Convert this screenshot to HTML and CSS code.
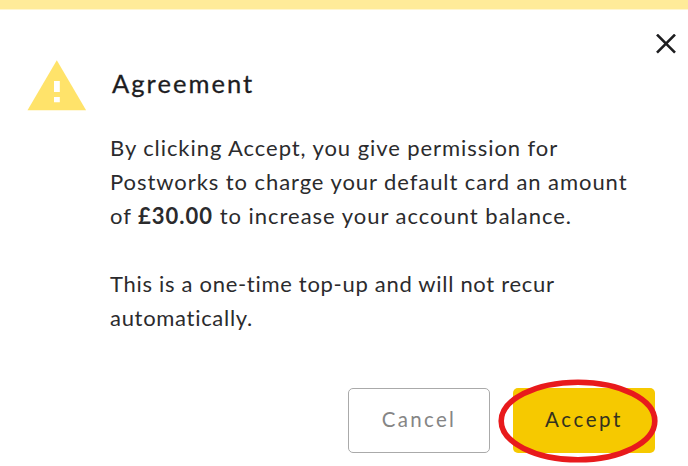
FILE: index.html
```html
<!DOCTYPE html>
<html lang="en">
  <head>
    <meta charset="utf-8">
    <title>Agreement</title>
    <link rel="stylesheet" href="styles.css">
  </head>
  <body>
    <div class="dialog">
      <button class="close" aria-label="Close">
        <svg width="20" height="20" viewBox="0 0 20 20">
          <path d="M1 .6L19 18.6M19 .6L1 18.6" stroke="#1d1d1f" stroke-width="2.6" />
        </svg>
      </button>
      <div class="header">
        <svg class="warning" width="60" height="51" viewBox="0 0 60 51">
          <path d="M29.8 .2L59.1 50.2H.5Z" fill="#ffe36a" />
          <path d="M27 21H32.8V32H27ZM27 37H32.8V42.3H27Z" fill="#fff" />
        </svg>
        <h1>Agreement</h1>
      </div>
      <div class="content">
        <p>
          By clicking Accept, you give permission for<br>
          Postworks to charge your default card an amount<br>
          <span class="amount">of <strong>£30.00</strong> to increase your account balance.</span>
        </p>
        <p class="note">
          This is a one-time top-up and will not recur<br>
          automatically.
        </p>
      </div>
      <div class="actions">
        <button class="btn cancel">Cancel</button>
        <button class="btn accept">
          Accept
          <svg class="highlight" width="160" height="84" viewBox="0 0 160 84">
            <ellipse cx="80" cy="42" rx="76.8" ry="38.8" fill="none" stroke="#e81a1c" stroke-width="5.6" />
          </svg>
        </button>
      </div>
    </div>
  </body>
</html>
```

FILE: styles.css
```css
body {
  margin: 0;
  background: #fff;
  color: #2b2b2d;
  font-family: Lato, "Liberation Sans", sans-serif;
}
.dialog {
  display: flex;
  flex-direction: column;
  box-sizing: border-box;
  height: 466px;
  border-top: 9px solid #ffeb99;
  box-shadow: inset 0 1px #fff6d0;
  overflow: hidden;
}
button {
  font-family: inherit;
  padding: 0;
}
.close {
  align-self: flex-end;
  margin: 25px 12px 0 0;
  width: 20px;
  height: 20px;
  border: none;
  background: none;
}
svg {
  display: block;
}
.header {
  display: flex;
  align-items: center;
  gap: 25px;
  height: 51px;
  margin: 6px 0 0 27px;
}
h1 {
  margin: 0 0 6px;
  color: #1d1d1f;
  font-size: 25.5px;
  font-weight: 400;
  letter-spacing: 2.05px;
  -webkit-text-stroke: 0.3px;
}
.content {
  margin: 20px 0 0 110px;
  font-size: 22px;
  line-height: 34px;
  letter-spacing: 0.93px;
  white-space: nowrap;
}
p {
  margin: 0 0 34px;
}
.amount {
  letter-spacing: 0.98px;
}
.note {
  letter-spacing: 0.7px;
}
strong {
  font-weight: 700;
}
.actions {
  display: flex;
  gap: 23px;
  margin: 19px 0 0 348px;
}
.btn {
  position: relative;
  box-sizing: border-box;
  width: 142px;
  height: 65px;
  padding-bottom: 3px;
  border: none;
  border-radius: 5px;
  font-size: 20.5px;
  letter-spacing: 2.3px;
}
.cancel {
  border: 1px solid #aaa;
  background: #fff;
  color: #858585;
}
.accept {
  background: #f6c900;
  color: #34321f;
  letter-spacing: 2.6px;
}
.highlight {
  position: absolute;
  left: -15px;
  top: -9.5px;
}
```
